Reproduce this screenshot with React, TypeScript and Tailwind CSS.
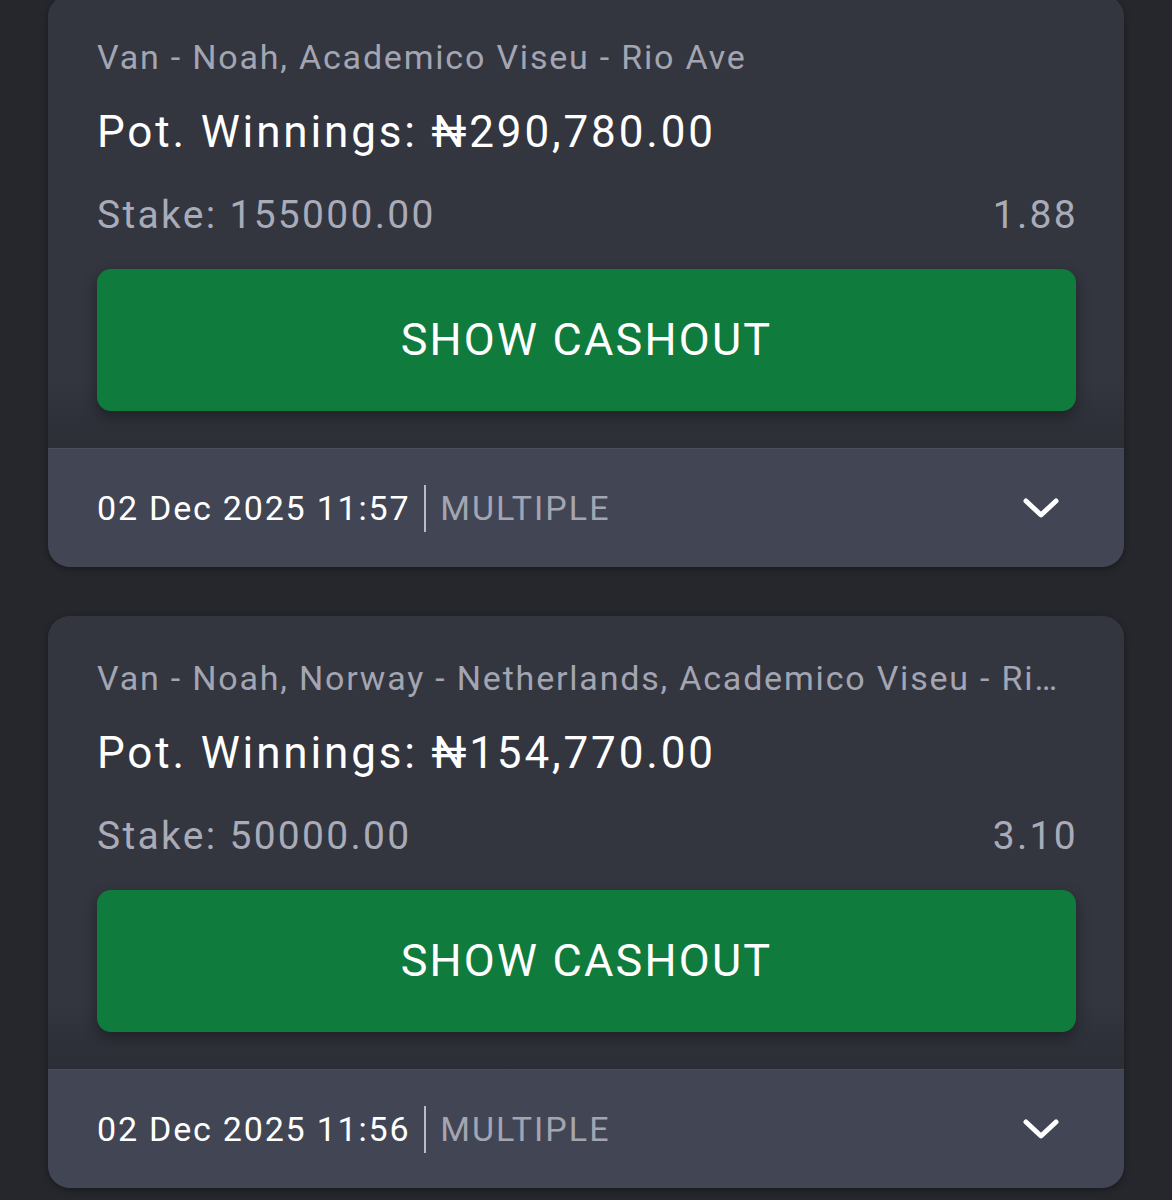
import React from "react";

type Bet = { title: string; win: string; stake: string; odds: string; date: string };

const bets: Bet[] = [
  { title: "Van - Noah, Academico Viseu - Rio Ave", win: "₦290,780.00", stake: "155000.00", odds: "1.88", date: "02 Dec 2025 11:57" },
  { title: "Van - Noah, Norway - Netherlands, Academico Viseu - Rio Ave", win: "₦154,770.00", stake: "50000.00", odds: "3.10", date: "02 Dec 2025 11:56" },
];

function Card({ b }: { b: Bet }) {
  return (
    <div className="mx-[48px] h-[572px] flex flex-col rounded-[22px] bg-[#33353f] overflow-hidden shadow-[0_2px_6px_rgba(0,0,0,0.35)]">
      <div className="flex-1 pl-[49px] pr-[48px] pt-[42px] flex flex-col bg-gradient-to-b from-[#33353f] from-85% to-[#2c2e36]">
        <div className="h-[40px] leading-[40px] text-[34px] text-[#a3a5b2] tracking-[1.8px] truncate pr-[14px]">{b.title}</div>
        <div className="mt-[30px] h-[50px] leading-[50px] text-[44px] text-white tracking-[2.85px]">Pot. Winnings: {b.win}</div>
        <div className="mt-[36px] h-[44px] leading-[44px] text-[39px] text-[#a9abb8] flex justify-between tracking-[2.3px]">
          <span>Stake: {b.stake}</span>
          <span className="-mr-[2px]">{b.odds}</span>
        </div>
        <button className="mt-[32px] h-[142px] w-full rounded-[14px] bg-[#0f7b3d] text-white text-[45px] tracking-[2.2px] shadow-[0_6px_14px_rgba(0,0,0,0.35)]">
          SHOW CASHOUT
        </button>
      </div>
      <div className="h-[119px] shrink-0 bg-[#424553] border-t border-[#4a4d5c] flex items-center pl-[49px] pr-[64px]">
        <span className="text-[34px] text-white tracking-[1.8px]">{b.date}</span>
        <span className="mx-[14px] w-[2px] h-[47px] bg-[#b9bbc6]" />
        <span className="text-[34px] text-[#a3a5b2] tracking-[2px]">MULTIPLE</span>
        <svg className="ml-auto mr-[1px]" width="36" height="22" viewBox="0 0 36 22" fill="none">
          <path d="M3 4 L18 18 L33 4" stroke="white" strokeWidth="5" strokeLinecap="round" strokeLinejoin="round" />
        </svg>
      </div>
    </div>
  );
}

export default function App() {
  return (
    <div className="w-[1172px] h-[1200px] overflow-hidden bg-[#25272c]" style={{ fontFamily: "Roboto, 'Noto Sans', sans-serif" }}>
      <div className="-mt-[5px] flex flex-col gap-[49px]">
        {bets.map((b, i) => (
          <Card key={i} b={b} />
        ))}
      </div>
    </div>
  );
}
